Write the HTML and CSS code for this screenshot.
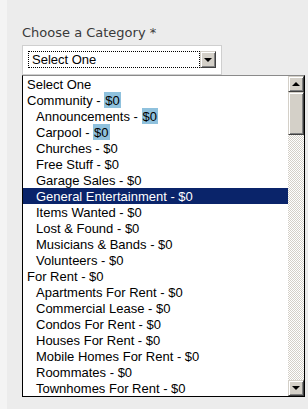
FILE: index.html
```html
<!DOCTYPE html>
<html>
<head>
<meta charset="utf-8">
<link rel="stylesheet" href="styles.css">
</head>
<body>
<div class="page">
  <label class="field-label">Choose a Category *</label>
  <div class="combo-frame">
    <div class="combo">
      <span class="combo-value">Select One</span>
      <span class="combo-btn"><span class="arrow-down"></span></span>
    </div>
  </div>
  <div class="listbox">
    <ul class="options">
      <li>Select One</li>
      <li>Community - <span class="hl">$0</span></li>
      <li class="sub">Announcements - <span class="hl">$0</span></li>
      <li class="sub">Carpool - <span class="hl">$0</span></li>
      <li class="sub">Churches - $0</li>
      <li class="sub">Free Stuff - $0</li>
      <li class="sub">Garage Sales - $0</li>
      <li class="sub selected">General Entertainment - $0</li>
      <li class="sub">Items Wanted - $0</li>
      <li class="sub">Lost &amp; Found - $0</li>
      <li class="sub">Musicians &amp; Bands - $0</li>
      <li class="sub">Volunteers - $0</li>
      <li>For Rent - $0</li>
      <li class="sub">Apartments For Rent - $0</li>
      <li class="sub">Commercial Lease - $0</li>
      <li class="sub">Condos For Rent - $0</li>
      <li class="sub">Houses For Rent - $0</li>
      <li class="sub">Mobile Homes For Rent - $0</li>
      <li class="sub">Roommates - $0</li>
      <li class="sub">Townhomes For Rent - $0</li>
    </ul>
    <div class="scrollbar">
      <div class="sb-btn"><span class="arrow-up"></span></div>
      <div class="sb-thumb"></div>
      <div class="sb-track"></div>
      <div class="sb-btn"><span class="arrow-down"></span></div>
    </div>
  </div>
</div>
</body>
</html>
```

FILE: styles.css
```css
html, body {
  margin: 0;
  padding: 0;
}
body {
  background: linear-gradient(to right, #f4f4f4 0 7px, #ececec 7px);
  height: 409px;
  overflow: hidden;
}
.page {
  padding: 25px 0 0 22px;
}
.field-label {
  display: block;
  font: 13px/15px "DejaVu Sans", Verdana, sans-serif;
  color: #3a3a3a;
  margin-bottom: 5px;
}
.combo-frame {
  box-sizing: border-box;
  width: 200px;
  height: 30px;
  border: 1px solid #cfcfcf;
  background: #fff;
  padding: 5px 0 0 5px;
}
.combo {
  display: flex;
  width: 188px;
  height: 17px;
}
.combo-value {
  flex: 1;
  box-sizing: border-box;
  border: 1px dotted #000;
  font: 13px/15px "Liberation Sans", Arial, sans-serif;
  color: #000;
  padding-left: 3px;
}
.combo-btn {
  width: 16px;
  height: 17px;
  box-sizing: border-box;
  background: #d4d0c8;
  border: 1px solid;
  border-color: #d4d0c8 #404040 #404040 #d4d0c8;
  box-shadow: inset 1px 1px #fff, inset -1px -1px #808080;
  display: flex;
  align-items: center;
  justify-content: center;
}
.arrow-down {
  width: 0;
  height: 0;
  border-left: 4px solid transparent;
  border-right: 4px solid transparent;
  border-top: 4px solid #000;
}
.arrow-up {
  width: 0;
  height: 0;
  border-left: 4px solid transparent;
  border-right: 4px solid transparent;
  border-bottom: 4px solid #000;
}
.listbox {
  box-sizing: border-box;
  width: 283px;
  height: 322px;
  border: 1px solid #000;
  border-top-color: #8a8a8a;
  background: #fff;
  display: flex;
}
.options {
  flex: 1;
  list-style: none;
  margin: 0;
  padding: 0;
  font: 13px/14px "Liberation Sans", Arial, sans-serif;
  color: #000;
  overflow: hidden;
}
.options li {
  box-sizing: border-box;
  height: 16px;
  padding-top: 2px;
  padding-left: 4px;
  white-space: nowrap;
}
.options li.sub {
  padding-left: 13px;
}
.options li.selected {
  background: #0a246a;
  color: #fff;
}
.hl {
  display: inline-block;
  vertical-align: top;
  box-sizing: border-box;
  height: 16px;
  margin-top: -2px;
  padding: 2px 1px 0;
  background: #8fc1dd;
}
.scrollbar {
  width: 16px;
  display: flex;
  flex-direction: column;
}
.sb-btn, .sb-thumb {
  box-sizing: border-box;
  background: #d4d0c8;
  border: 1px solid;
  border-color: #d4d0c8 #404040 #404040 #d4d0c8;
  box-shadow: inset 1px 1px #fff, inset -1px -1px #808080;
}
.sb-btn {
  height: 16px;
  display: flex;
  align-items: center;
  justify-content: center;
}
.sb-thumb {
  height: 43px;
}
.sb-track {
  flex: 1;
  background-color: #fff;
  background-image: repeating-conic-gradient(#d4d0c8 0 25%, #fff 0 50%);
  background-size: 2px 2px;
}
```
